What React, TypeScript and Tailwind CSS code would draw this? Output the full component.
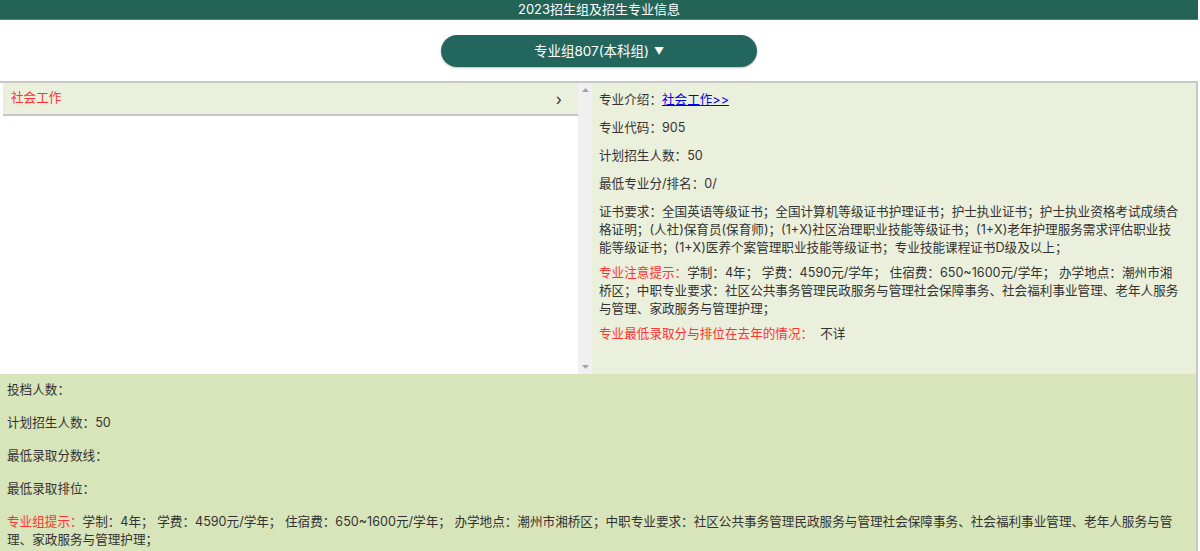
const font = { fontFamily: '"Microsoft YaHei", Inter, "Noto Sans CJK SC", sans-serif' };

function ScrollTrack() {
  return (
    <div className="w-[14px] shrink-0 bg-[#f0f0f0] flex flex-col items-center justify-between py-[5px]">
      <svg width="7" height="4" viewBox="0 0 7 4">
        <path d="M3.5 0 L7 4 L0 4 Z" fill="#a3a3a3" />
      </svg>
      <svg width="7" height="4" viewBox="0 0 7 4">
        <path d="M0 0 L7 0 L3.5 4 Z" fill="#a3a3a3" />
      </svg>
    </div>
  );
}

export default function App() {
  return (
    <div className="w-[1198px] bg-white text-[#333] min-h-[551px]" style={font}>
      {/* title bar */}
      <div className="h-[20px] bg-[#236457] text-white text-[13px] leading-[18px] text-center border-b border-[#4d8479]">
        2023招生组及招生专业信息
      </div>

      {/* group selector */}
      <div className="h-[61px] flex items-center justify-center">
        <button className="w-[316px] h-[32px] rounded-full bg-[#23665e] text-white text-[13.5px] shadow-[0_1px_2px_rgba(0,0,0,0.25)] mt-[1px] flex items-center justify-center gap-[5px]">
          <span>专业组807(本科组)</span>
          <span className="text-[10px]">▼</span>
        </button>
      </div>

      <div className="border-t-2 border-r-2 border-[#c8c8c8]">
        {/* list + detail */}
        <div className="flex h-[291px]">
          <div className="w-[578px] shrink-0 pl-[3px] bg-white">
            <div className="h-[33px] bg-[#ebf0dc] border-b-2 border-[#c6c6c6] flex items-center justify-between pl-[8px] pr-[16px] text-[12.6px]">
              <span className="text-[#ff3333]">社会工作</span>
              <span className="text-[#333] text-[16px] leading-none">›</span>
            </div>
          </div>
          <ScrollTrack />
          <div className="flex-1 bg-[#ebf0dc] pl-[7px] pr-[17px] pt-[8px] text-[12.6px] leading-[18px] flex flex-col gap-[7px]">
            <p className="pb-[3px]">
              专业介绍：
              <a href="#" className="text-[#0000ee] underline">社会工作&gt;&gt;</a>
            </p>
            <p className="pb-[3px]">专业代码：905</p>
            <p className="pb-[3px]">计划招生人数：50</p>
            <p className="pb-[3px]">最低专业分/排名：0/</p>
            <p>
              证书要求：全国英语等级证书；全国计算机等级证书护理证书；护士执业证书；护士执业资格考试成绩合格证明；(人社)保育员(保育师)；(1+X)社区治理职业技能等级证书；(1+X)老年护理服务需求评估职业技能等级证书；(1+X)医养个案管理职业技能等级证书；专业技能课程证书D级及以上；
            </p>
            <p>
              <span className="text-[#ff3333]">专业注意提示：</span>
              学制：4年； 学费：4590元/学年； 住宿费：650~1600元/学年； 办学地点：潮州市湘桥区；中职专业要求：社区公共事务管理民政服务与管理社会保障事务、社会福利事业管理、老年人服务与管理、家政服务与管理护理；
            </p>
            <p>
              <span className="text-[#ff3333]">专业最低录取分与排位在去年的情况：</span>
              {'\u00a0\u00a0'}不详
            </p>
          </div>
        </div>

        {/* group summary */}
        <div className="bg-[#d8e4b9] pl-[7px] pr-[10px] pt-[7px] pb-[12px] text-[12.6px] leading-[17.5px] flex flex-col gap-[15.5px]">
          <p>投档人数：</p>
          <p>计划招生人数：50</p>
          <p>最低录取分数线：</p>
          <p>最低录取排位：</p>
          <p>
            <span className="text-[#ff3333]">专业组提示：</span>
            学制：4年； 学费：4590元/学年； 住宿费：650~1600元/学年； 办学地点：潮州市湘桥区；中职专业要求：社区公共事务管理民政服务与管理社会保障事务、社会福利事业管理、老年人服务与管理、家政服务与管理护理；
          </p>
        </div>
      </div>
    </div>
  );
}
